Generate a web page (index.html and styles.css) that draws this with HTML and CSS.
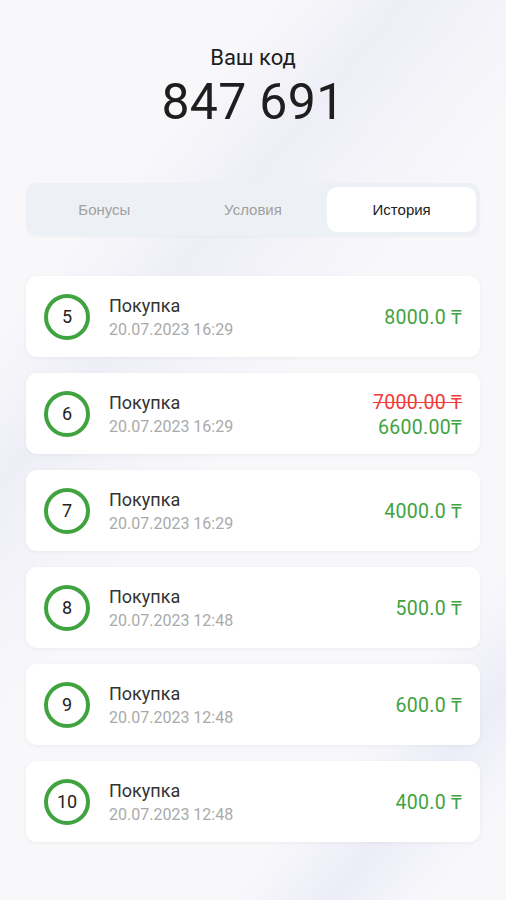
FILE: index.html
```html
<!DOCTYPE html>
<html lang="ru">
<head>
    <meta charset="UTF-8">
    <meta name="viewport" content="width=device-width, initial-scale=1.0">
    <title>История</title>
    <link rel="stylesheet" href="styles.css">
</head>
<body>
    <div class="screen">
        <header class="code-block">
            <p class="code-label">Ваш код</p>
            <p class="code-value">847 691</p>
        </header>

        <nav class="tabs">
            <button class="tab">Бонусы</button>
            <button class="tab">Условия</button>
            <button class="tab tab-active">История</button>
        </nav>

        <div class="history">
            <div class="item">
                <div class="num">5</div>
                <div class="info">
                    <div class="title">Покупка</div>
                    <div class="date">20.07.2023 16:29</div>
                </div>
                <div class="amount">8000.0 ₸</div>
            </div>

            <div class="item">
                <div class="num">6</div>
                <div class="info">
                    <div class="title">Покупка</div>
                    <div class="date">20.07.2023 16:29</div>
                </div>
                <div class="amount">
                    <div class="old-price">7000.00 ₸</div>
                    <div>6600.00₸</div>
                </div>
            </div>

            <div class="item">
                <div class="num">7</div>
                <div class="info">
                    <div class="title">Покупка</div>
                    <div class="date">20.07.2023 16:29</div>
                </div>
                <div class="amount">4000.0 ₸</div>
            </div>

            <div class="item">
                <div class="num">8</div>
                <div class="info">
                    <div class="title">Покупка</div>
                    <div class="date">20.07.2023 12:48</div>
                </div>
                <div class="amount">500.0 ₸</div>
            </div>

            <div class="item">
                <div class="num">9</div>
                <div class="info">
                    <div class="title">Покупка</div>
                    <div class="date">20.07.2023 12:48</div>
                </div>
                <div class="amount">600.0 ₸</div>
            </div>

            <div class="item">
                <div class="num">10</div>
                <div class="info">
                    <div class="title">Покупка</div>
                    <div class="date">20.07.2023 12:48</div>
                </div>
                <div class="amount">400.0 ₸</div>
            </div>
        </div>
    </div>
</body>
</html>
```

FILE: styles.css
```css
:root {
    --green: #3fa33f;
    --red: #f23b3b;
    --text: #1e1e1e;
    --muted: #aaaaaa;
    --bg: #f8f8fb;
}

* {
    margin: 0;
    padding: 0;
    box-sizing: border-box;
}

html, body {
    height: 100%;
}

body {
    font-family: Roboto, "Noto Sans", Arial, sans-serif;
    color: var(--text);
    background-color: var(--bg);
    background-image:
        linear-gradient(130deg, transparent 78%, rgba(225, 225, 245, 0.5) 86%, transparent 94%),
        linear-gradient(130deg, transparent 22%, rgba(232, 232, 244, 0.6) 32%, transparent 48%);
    overflow: hidden;
}

.screen {
    padding: 0 26px;
}

.code-block {
    text-align: center;
    padding-top: 44px;
}

.code-label {
    font-size: 22px;
    line-height: 28px;
}

.code-value {
    font-size: 50px;
    line-height: 60px;
    letter-spacing: 0.3px;
}

.tabs {
    margin-top: 51px;
    display: grid;
    grid-template-columns: 1fr 1fr 1fr;
    padding: 4px;
    background-color: #edf1f5;
    border-radius: 11px;
    box-shadow: 0 1px 3px rgba(0, 0, 0, 0.03);
}

.tab {
    height: 45px;
    border: none;
    background: none;
    font-family: "Liberation Sans", Arial, sans-serif;
    font-size: 15px;
    color: #a0a0a0;
    border-radius: 10px;
}

.tab-active {
    background-color: white;
    color: #222;
}

.history {
    margin-top: 40px;
    display: flex;
    flex-direction: column;
    gap: 16px;
}

.item {
    height: 81px;
    display: flex;
    align-items: center;
    padding: 0 18px;
    background-color: white;
    border-radius: 11px;
    box-shadow: 0 1px 4px rgba(0, 0, 0, 0.05);
}

.num {
    width: 46px;
    height: 46px;
    flex-shrink: 0;
    border: 4px solid var(--green);
    border-radius: 50%;
    display: flex;
    align-items: center;
    justify-content: center;
    font-size: 18px;
    color: #222;
}

.info {
    margin-left: 19px;
    padding-top: 3px;
    flex: 1;
}

.title {
    font-size: 18px;
    line-height: 22px;
    color: #333;
}

.date {
    font-size: 16px;
    line-height: 24px;
    margin-top: 1px;
    color: var(--muted);
}

.amount {
    text-align: right;
    font-size: 19.5px;
    line-height: 25px;
    letter-spacing: 0.3px;
    padding-top: 2px;
    color: var(--green);
}

.old-price {
    color: var(--red);
    text-decoration: line-through;
}
```
